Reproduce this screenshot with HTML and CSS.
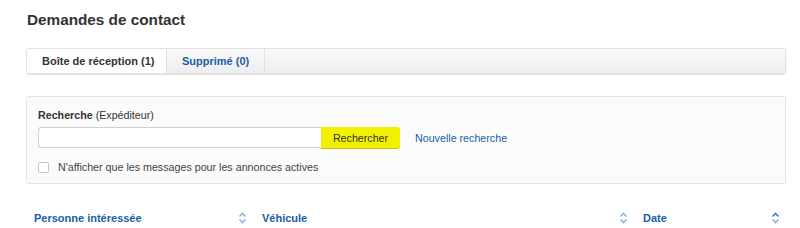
FILE: index.html
```html
<!DOCTYPE html>
<html lang="fr">
<head>
<meta charset="utf-8">
<link rel="stylesheet" href="styles.css">
</head>
<body>
<div class="page">
  <h1 class="title">Demandes de contact</h1>
  <div class="tabs">
    <div class="tab active">Boîte de réception (1)</div>
    <div class="tab second">Supprimé (0)</div>
  </div>
  <div class="panel">
    <div class="label"><b>Recherche</b> (Expéditeur)</div>
    <div class="search-row">
      <input class="search-input" type="text">
      <button class="search-btn">Rechercher</button>
      <a class="new-search" href="#">Nouvelle recherche</a>
    </div>
    <label class="check-row"><span class="checkbox"></span>N'afficher que les messages pour les annonces actives</label>
  </div>
  <div class="table-head">
    <div class="th col-person">Personne intéressée<span class="sort"><svg width="9" height="12" viewBox="0 0 9 12"><path d="M1.5 4.5 L4.5 1.5 L7.5 4.5 M1.5 7.5 L4.5 10.5 L7.5 7.5" fill="none" stroke="#8cb4e6" stroke-width="1.6"/></svg></span></div>
    <div class="th col-vehicle">Véhicule<span class="sort"><svg width="9" height="12" viewBox="0 0 9 12"><path d="M1.5 4.5 L4.5 1.5 L7.5 4.5 M1.5 7.5 L4.5 10.5 L7.5 7.5" fill="none" stroke="#8cb4e6" stroke-width="1.6"/></svg></span></div>
    <div class="th col-date">Date<span class="sort"><svg width="9" height="12" viewBox="0 0 9 12"><path d="M1.5 4.5 L4.5 1.5 L7.5 4.5" fill="none" stroke="#3a7bd0" stroke-width="1.6"/><path d="M1.5 7.5 L4.5 10.5 L7.5 7.5" fill="none" stroke="#8cb4e6" stroke-width="1.6"/></svg></span></div>
  </div>
</div>
</body>
</html>
```
FILE: styles.css
```css
html, body { margin: 0; padding: 0; background: #fff; }
body { font-family: "Liberation Sans", Arial, sans-serif; color: #333; font-size: 10.7px; }
.page { padding: 11px 14px 0 26px; width: 760px; }
.title { margin: 0 0 0 1px; font-size: 15.3px; font-weight: bold; color: #333; line-height: 18px; }
.tabs { display: flex; margin-top: 19px; height: 24px; border: 1px solid #e2e2e2; border-radius: 3px; background: linear-gradient(#f9f9f9, #ededed); box-shadow: 0 1px 1px rgba(0,0,0,0.12); }
.tab { box-sizing: border-box; display: flex; align-items: center; padding-left: 15px; white-space: nowrap; font-weight: bold; font-size: 11px; color: #1a5ea8; border-right: 1px solid #e0e0e0; }
.tab.active { background: #fff; color: #333; width: 140px; border-radius: 3px 0 0 3px; }
.tab.second { width: 98px; }
.panel { margin-top: 22px; border: 1px solid #e4e4e4; border-radius: 3px; background: #fbfbfb; padding: 11px 11px 8px 11px; height: 67px; }
.label { line-height: 14px; color: #333; }
.search-row { display: flex; align-items: center; margin-top: 5px; }
.search-input { box-sizing: border-box; width: 283px; height: 21px; border: 1px solid #cfcfcf; border-right: none; border-radius: 3px 0 0 3px; background: #fff; margin: 0; padding: 0 4px; }
.search-btn { box-sizing: border-box; width: 79px; height: 21px; border: none; border-radius: 0 3px 3px 0; background: #f0f000; box-shadow: 0 1px 0 #c8c800; font-family: "Liberation Sans", Arial, sans-serif; font-size: 10.7px; color: #333; margin: 0; padding: 0; }
.new-search { margin-left: 15px; color: #1a5ea8; text-decoration: none; }
.check-row { display: flex; align-items: center; margin-top: 13px; color: #444; }
.checkbox { box-sizing: border-box; width: 11px; height: 11px; border: 1px solid #c8c8c8; border-radius: 2px; background: #fff; margin-right: 9px; }
.table-head { display: flex; margin-top: 28px; padding-left: 8px; font-weight: bold; font-size: 11px; color: #1a5ea8; }
.th { display: flex; align-items: center; justify-content: space-between; }
.col-person { width: 213px; margin-right: 15px; }
.col-vehicle { width: 366px; margin-right: 15px; }
.col-date { width: 137px; }
.sort { display: flex; }
```
